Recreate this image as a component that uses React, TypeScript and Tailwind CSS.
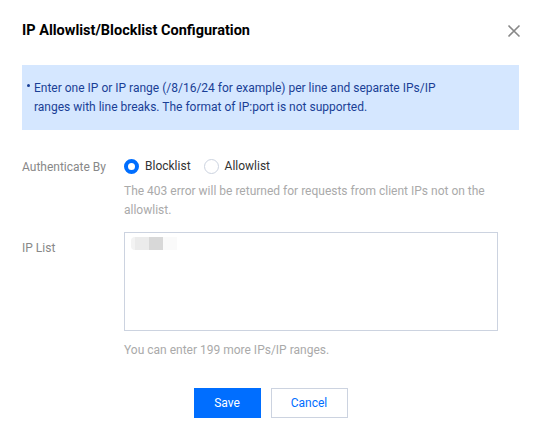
import { useState } from "react";

export default function App() {
  const [mode, setMode] = useState<"block" | "allow">("block");

  return (
    <div
      className="h-[436px] w-[541px] bg-white px-[22px] pt-[22px] text-[12px] text-[#333]"
      style={{ fontFamily: 'Roboto, "Liberation Sans", sans-serif' }}
    >
      <div className="flex h-[18px] items-center justify-between">
        <h2 className="text-[14.5px] font-bold text-black">IP Allowlist/Blocklist Configuration</h2>
        <button type="button" aria-label="Close" className="mr-[-2px] text-[#888]">
          <svg width="14" height="14" viewBox="0 0 14 14" fill="none" stroke="currentColor" strokeWidth="1.6">
            <path d="M1.5 1.5l11 11M12.5 1.5l-11 11" />
          </svg>
        </button>
      </div>

      <div className="mt-[25px] h-[65px] bg-[#d5e7ff] pl-[5px] pt-[14px] leading-[19px] text-[#1a3f96]">
        <div className="flex">
          <span className="w-[7px] shrink-0 pt-[5px]">
            <span className="block h-[3px] w-[3px] rounded-full bg-[#1a3f96]" />
          </span>
          <p className="w-[440px]">
            Enter one IP or IP range (/8/16/24 for example) per line and separate IPs/IP ranges with line breaks. The
            format of IP:port is not supported.
          </p>
        </div>
      </div>

      <div className="mt-[28px] flex">
        <div className="w-[102px] text-[#888]">Authenticate By</div>
        <div className="flex-1">
          <div className="flex h-[16px] items-center">
            <button type="button" onClick={() => setMode("block")} className="flex items-center">
              <Radio checked={mode === "block"} />
              <span className="ml-[6px] text-[#333]">Blocklist</span>
            </button>
            <button type="button" onClick={() => setMode("allow")} className="ml-[13px] flex items-center">
              <Radio checked={mode === "allow"} />
              <span className="ml-[6px] text-[#333]">Allowlist</span>
            </button>
          </div>
          <p className="mt-[8px] w-[385px] leading-[19px] text-[#aaa]">
            The 403 error will be returned for requests from client IPs not on the allowlist.
          </p>
        </div>
      </div>

      <div className="mt-[12px] flex">
        <div className="w-[102px] pt-[7px] text-[#888]">IP List</div>
        <div className="flex-1">
          <div className="relative h-[99px] w-[374px] border border-[#ccd3e0] bg-white">
            <div className="absolute left-[6px] top-[4px] flex h-[13px]">
              <span className="w-[4px] rounded-l-full bg-[#f3f3f3]" />
              <span className="w-[14px] bg-[#ebebeb]" />
              <span className="w-[14px] bg-[#d8d8d8]" />
              <span className="w-[14px] bg-[#fafafa]" />
            </div>
          </div>
          <p className="mt-[10px] text-[#aaa]">You can enter 199 more IPs/IP ranges.</p>
        </div>
      </div>

      <div className="mt-[29px] flex justify-center gap-[10px]">
        <button type="button" className="h-[30px] w-[67px] bg-[#006eff] text-white">
          Save
        </button>
        <button type="button" className="h-[30px] w-[77px] border border-[#ccd3e0] bg-white text-[#006eff]">
          Cancel
        </button>
      </div>
    </div>
  );
}

function Radio({ checked }: { checked: boolean }) {
  return checked ? (
    <span className="box-border block h-[15px] w-[15px] rounded-full border-[4px] border-[#006eff] bg-white" />
  ) : (
    <span className="box-border block h-[15px] w-[15px] rounded-full border border-[#ccd3e0] bg-white" />
  );
}
